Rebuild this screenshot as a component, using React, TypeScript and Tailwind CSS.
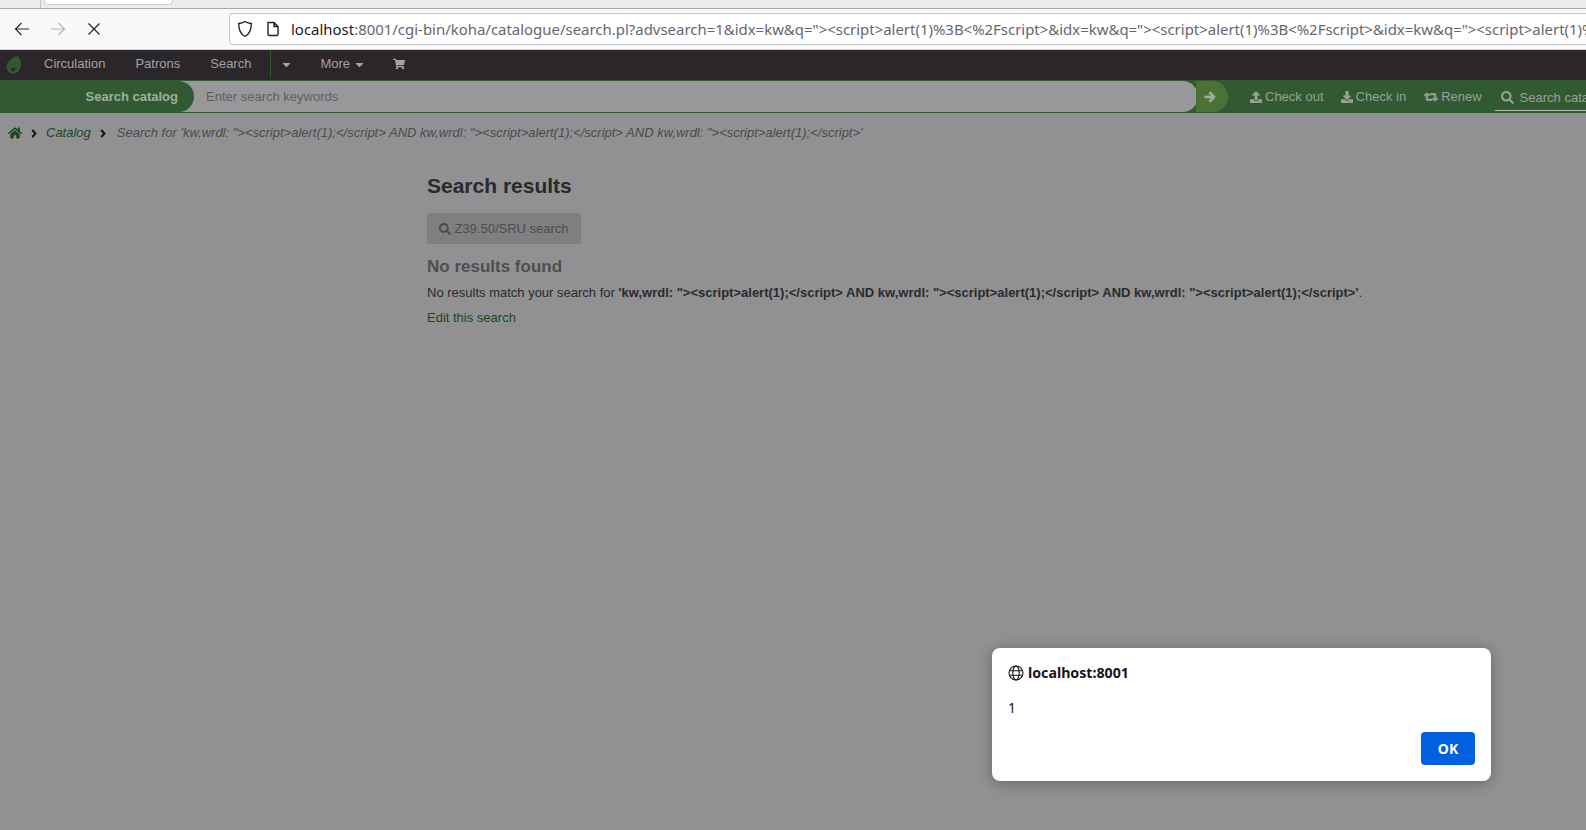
import React from 'react';
import { FaHome, FaShoppingCart, FaSearch, FaUpload, FaDownload, FaRetweet, FaArrowRight, FaCaretDown } from 'react-icons/fa';

const sans = 'font-["Liberation_Sans",Arial,sans-serif]';
const ui = 'font-["Noto_Sans",sans-serif]';
const query = 'kw,wrdl: "><script>alert(1);</script>';
const trail = `${query} AND ${query} AND ${query}`;

function Crumb() {
  return (
    <svg width="6" height="9" viewBox="0 0 6 9" fill="none" stroke="#111" strokeWidth="1.9" className="shrink-0">
      <path d="M1.200 1l3.300 3.500L1.200 8" />
    </svg>
  );
}

function BrowserBar() {
  return (
    <div className="shrink-0">
      <div className="h-[9px] bg-[#ececec] border-b border-[#a9a9a9] flex overflow-hidden">
        <div className="w-[41px] border-r border-[#c4c4c4]" />
        <div className="ml-[3px] w-[129px] h-[5px] bg-white rounded-b border border-t-0 border-[#cfcfcf]" />
      </div>
      <div className="h-[41px] bg-[#f9f9fb] flex items-center pl-[14px] border-b border-[#d4d4d4]">
        <svg width="16" height="16" viewBox="0 0 16 16" fill="none" stroke="#2b2b2f" strokeWidth="1.2">
          <path d="M15 8H1.5M7.5 2 1.5 8l6 6" />
        </svg>
        <svg className="ml-[20px]" width="16" height="16" viewBox="0 0 16 16" fill="none" stroke="#b4b4b6" strokeWidth="1.2">
          <path d="M1 8h13.5M8.5 2l6 6-6 6" />
        </svg>
        <svg className="ml-[20px]" width="16" height="16" viewBox="0 0 16 16" fill="none" stroke="#2b2b2f" strokeWidth="1.3">
          <path d="M2.5 2.5l11 11M13.5 2.5l-11 11" />
        </svg>
        <div className="ml-[127px] flex-1 h-[32px] bg-white border border-[#c6c6c8] rounded-l-[4px] border-r-0 flex items-center pl-[7px] overflow-hidden whitespace-nowrap">
          <svg width="16" height="18" viewBox="0 0 16 18" fill="none" stroke="#232326" strokeWidth="1.4" className="shrink-0">
            <path d="M8 1.5c2 1.3 4 1.9 6.3 2 0 6-1.5 10.500-6.300 13C3.200 14 1.700 9.500 1.700 3.500c2.300-.1 4.300-.7 6.300-2z" />
          </svg>
          <svg width="14" height="16" viewBox="0 0 14 16" fill="none" stroke="#232326" strokeWidth="1.4" className="ml-[13px] shrink-0">
            <path d="M2 1.500h6l4 4V13a1.500 1.500 0 0 1-1.500 1.500h-7A1.500 1.500 0 0 1 2 13zM8 1.500v4h4" />
          </svg>
          <span className={`ml-[11px] text-[14.950px] text-[#66666f] ${ui}`}>
            <span className="text-[#1c1b22]">localhost</span>
            :8001/cgi-bin/koha/catalogue/search.pl?advsearch=1&amp;idx=kw&amp;q="&gt;&lt;script&gt;alert(1)%3B&lt;%2Fscript&gt;&amp;idx=kw&amp;q="&gt;&lt;script&gt;alert(1)%3B&lt;%2Fscript&gt;&amp;idx=kw&amp;q="&gt;&lt;script&gt;alert(1)%3B&lt;%2Fscript&gt;
          </span>
        </div>
      </div>
    </div>
  );
}

function TopNav() {
  return (
    <div className={`h-[30px] shrink-0 bg-[#2a2629] flex items-center pb-[2px] text-[13px] text-[#a1a1a6] ${sans}`}>
      <svg className="ml-[6px] mt-[2px]" width="16" height="18" viewBox="0 0 16 18">
        <path d="M11.500 0c3.500 3 4.500 8.500 2.300 13.500C12.300 16.500 8.500 18.300 5 17.500 1.500 16.500-.5 12.500 1 8 2.500 4 7 1 11.500 0z" fill="#2f5a31" />
        <path d="M4.500 13.500c1-2 4-2.300 6.500-1-1.800.7-2.800 1.700-3.300 3-1.300 0-2.600-.8-3.200-2z" fill="#2a2629" />
      </svg>
      <span className="ml-[22px]">Circulation</span>
      <span className="ml-[30px]">Patrons</span>
      <span className="ml-[30px]">Search</span>
      <div className="ml-[19px] w-px h-[27px] self-start bg-[#2f5a31]" />
      <FaCaretDown className="ml-[9px] text-[13px]" />
      <span className="ml-[27px]">More</span>
      <FaCaretDown className="ml-[3px] text-[13px]" />
      <FaShoppingCart className="ml-[27px] text-[12px]" />
    </div>
  );
}

function SearchBar() {
  return (
    <div className={`h-[33px] shrink-0 bg-[#315a32] flex text-[13px] ${sans}`}>
      <div className="h-[31px] mt-px w-[1198px] shrink-0 flex bg-[#98989a] rounded-r-[16px]">
        <div className="w-[194px] h-full bg-[#315a32] rounded-r-[16px] flex items-center justify-end pr-[16px] font-bold text-[#a3aea3]">
          Search catalog
        </div>
        <div className="flex-1 pl-[12px] flex items-center text-[#5f5f60]">Enter search keywords</div>
      </div>
      <div className="w-[32px] shrink-0 -ml-[2px] h-[31px] mt-px bg-[#4b7134] rounded-r-[16px] flex items-center pl-[8px] text-[#a6ad9f]">
        <FaArrowRight className="text-[12px]" strokeWidth={40} />
      </div>
      <div className="flex shrink-0 items-center text-[#99a299] whitespace-nowrap">
        <FaUpload className="ml-[22px] text-[12px]" />
        <span className="ml-[3px]">Check out</span>
        <FaDownload className="ml-[17px] text-[12px]" />
        <span className="ml-[3px]">Check in</span>
        <FaRetweet className="ml-[18px] text-[14px]" strokeWidth={30} />
        <span className="ml-[3px]">Renew</span>
        <div className="ml-[13px] h-[26px] pl-[6px] flex items-center gap-[6px] border-b border-[#b5bab4] w-[100px] mt-[3px]">
          <FaSearch className="text-[13px] shrink-0" />
          <span>Search catalog</span>
        </div>
      </div>
    </div>
  );
}

function Breadcrumbs() {
  return (
    <div className={`flex items-center h-[40px] pl-[8px] text-[13px] italic text-[#4b4b4c] whitespace-nowrap ${sans}`}>
      <FaHome className="text-[#18481c] text-[14px]" />
      <span className="ml-[9px]"><Crumb /></span>
      <span className="ml-[9px] text-[#18481c]">Catalog</span>
      <span className="ml-[9px]"><Crumb /></span>
      <span className="ml-[11px]">Search for '{trail}'</span>
    </div>
  );
}

function Results() {
  return (
    <div className={`pl-[427px] pt-[20px] ${sans}`}>
      <h1 className="text-[21px] leading-[26px] font-bold text-[#2a2a2b]">Search results</h1>
      <div className="mt-[14px] w-[154px] h-[31px] bg-[#7f7f81] rounded-[3px] flex items-center justify-center gap-[3px] text-[13px] text-[#4c4c4d]">
        <FaSearch className="text-[12px]" />
        Z39.50/SRU search
      </div>
      <h2 className="mt-[12px] text-[17px] leading-[22px] font-bold text-[#4e4e4f]">No results found</h2>
      <p className="mt-[6px] text-[13px] leading-[18px] text-[#2a2a2b] whitespace-nowrap">
        No results match your search for <b>'{trail}'</b>.
      </p>
      <a className="block mt-[7px] text-[13px] leading-[18px] text-[#18481c]">Edit this search</a>
    </div>
  );
}

function AlertDialog() {
  return (
    <div className={`absolute left-[992px] top-[648px] w-[499px] h-[133px] bg-white rounded-[8px] shadow-[0_2px_14px_rgba(0,0,0,0.3)] px-[16px] pt-[15px] text-[#15141a] ${ui}`}>
      <div className="flex items-center gap-[4px] text-[14.200px] font-bold leading-[20px]">
        <svg width="16" height="16" viewBox="0 0 16 16" fill="none" stroke="#15141a" strokeWidth="1.100">
          <circle cx="8" cy="8" r="7" />
          <ellipse cx="8" cy="8" rx="3.200" ry="7" />
          <path d="M1.300 5.800h13.400M1.300 10.200h13.400" />
        </svg>
        localhost:8001
      </div>
      <div className="mt-[15px] text-[14px] leading-[20px]">1</div>
      <div className="absolute right-[16px] bottom-[16px] w-[54px] h-[33px] bg-[#0060df] rounded-[4px] flex items-center justify-center text-white text-[14px] font-bold">
        OK
      </div>
    </div>
  );
}

export default function App() {
  return (
    <div className="relative w-[1586px] h-[830px] overflow-hidden bg-[#919193] flex flex-col">
      <BrowserBar />
      <TopNav />
      <SearchBar />
      <Breadcrumbs />
      <Results />
      <AlertDialog />
    </div>
  );
}
